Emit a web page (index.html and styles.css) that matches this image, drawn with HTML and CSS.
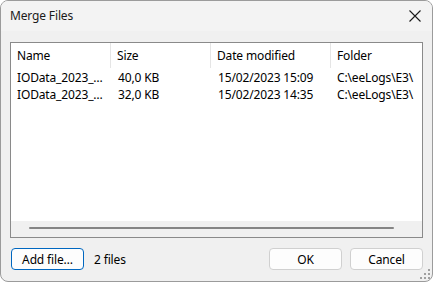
FILE: index.html
```html
<!DOCTYPE html>
<html>
<head>
<meta charset="utf-8">
<link rel="stylesheet" href="styles.css">
</head>
<body>
<div class="window">
  <div class="titlebar">
    <span class="title">Merge Files</span>
    <svg class="close" width="12" height="12" viewBox="0 0 12 12"><path d="M0.5 0.5 L11.5 11.5 M11.5 0.5 L0.5 11.5" stroke="#1a1a1a" stroke-width="1.1" fill="none"/></svg>
  </div>
  <div class="content">
    <div class="list">
      <div class="row header">
        <div class="cell c1">Name</div>
        <div class="cell c2">Size</div>
        <div class="cell c3">Date modified</div>
        <div class="cell c4">Folder</div>
      </div>
      <div class="rows">
        <div class="row item">
          <div class="cell c1">IOData_2023_…</div>
          <div class="cell c2">40,0 KB</div>
          <div class="cell c3">15/02/2023 15:09</div>
          <div class="cell c4">C:\eeLogs\E3\</div>
        </div>
        <div class="row item">
          <div class="cell c1">IOData_2023_…</div>
          <div class="cell c2">32,0 KB</div>
          <div class="cell c3">15/02/2023 14:35</div>
          <div class="cell c4">C:\eeLogs\E3\</div>
        </div>
      </div>
      <div class="hscroll"><div class="thumb"></div></div>
    </div>
    <div class="footer">
      <button class="btn default">Add file…</button>
      <span class="count">2 files</span>
      <span class="spacer"></span>
      <button class="btn">OK</button>
      <button class="btn">Cancel</button>
    </div>
  </div>
  <svg class="grip" width="10" height="10" viewBox="0 0 10 10" fill="#a0a0a0">
    <rect x="8" y="0" width="2" height="2"/>
    <rect x="4" y="4" width="2" height="2"/><rect x="8" y="4" width="2" height="2"/>
    <rect x="0" y="8" width="2" height="2"/><rect x="4" y="8" width="2" height="2"/><rect x="8" y="8" width="2" height="2"/>
  </svg>
</div>
</body>
</html>
```
FILE: styles.css
```css
* { box-sizing: border-box; }
html, body { margin: 0; padding: 0; background: #ffffff; }
body {
  font-family: "Noto Sans", "Open Sans", sans-serif;
  font-size: 12px;
  letter-spacing: -0.15px;
  color: #000;
}
.window {
  position: relative;
  width: 433px;
  height: 282px;
  border: 1px solid #9b9b9b;
  border-radius: 8px;
  overflow: hidden;
  background: #f0f0f0;
  display: flex;
  flex-direction: column;
}
.titlebar {
  height: 30px;
  background: #f3f3f3;
  display: flex;
  align-items: center;
  padding: 0 11px 1px 9px;
}
.title { flex: 1; font-size: 12px; color: #1a1a1a; }
.close { display: block; }
.content {
  flex: 1;
  padding: 11px 9px 0 9px;
  display: flex;
  flex-direction: column;
}
.list {
  height: 196px;
  border: 1px solid #8a8a8a;
  background: #fff;
  display: flex;
  flex-direction: column;
}
.row { display: flex; }
.header { height: 25px; }
.header .cell {
  border-right: 1px solid #e5e5e5;
  line-height: 25px;
}
.cell {
  padding-left: 6px;
  white-space: nowrap;
  overflow: hidden;
}
.c1 { width: 100px; }
.c2 { width: 100px; }
.c3 { width: 120px; }
.c4 { flex: 1; }
.header .c4 { border-right: none; }
.rows { flex: 1; padding-top: 1px; }
.item { height: 17px; line-height: 17px; }
.item .c2 { padding-left: 7px; }
.item .c3 { padding-left: 7px; }
.hscroll {
  height: 16px;
  background: #f0f0f0;
  padding: 6px 28px 0 18px;
}
.thumb {
  height: 2px;
  background: #858585;
  border-radius: 1px;
}
.footer {
  margin-top: 10px;
  display: flex;
  align-items: center;
}
.btn {
  font-family: inherit;
  font-size: 12px;
  letter-spacing: -0.15px;
  height: 22px;
  width: 73px;
  background: #fdfdfd;
  border: 1px solid #d0d0d0;
  border-radius: 4px;
  padding: 0;
  margin: 0;
  color: #000;
}
.btn.default { border-color: #0067c0; margin-left: 1px; }
.count { margin-left: 10px; }
.spacer { flex: 1; }
.btn + .btn { margin-left: 8px; }
.grip { position: absolute; right: 2px; bottom: 2px; }
```
